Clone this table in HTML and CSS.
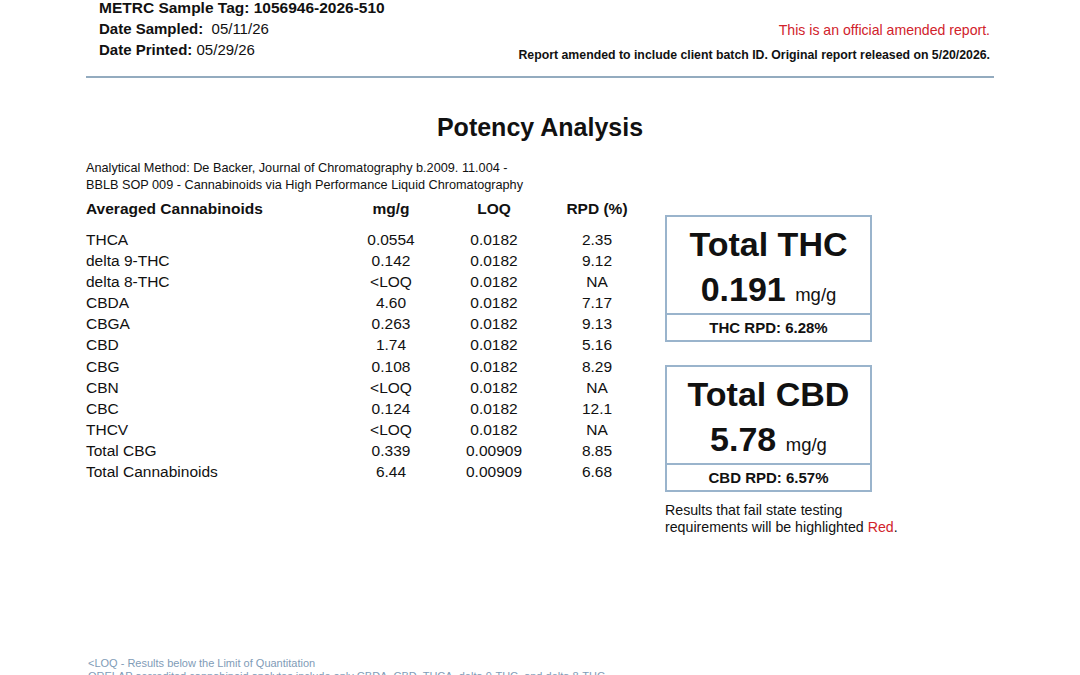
FILE: index.html
```html
<!DOCTYPE html>
<html lang="en">
<head>
<meta charset="utf-8">
<title>Potency Analysis</title>
<link rel="stylesheet" href="styles.css">
</head>
<body>
<div class="page">
  <header class="top">
    <div class="ids">
      <div class="tag">METRC Sample Tag: 1056946-2026-510</div>
      <div class="meta first-meta"><b>Date Sampled:</b>&nbsp; 05/11/26</div>
      <div class="meta"><b>Date Printed:</b> 05/29/26</div>
    </div>
    <div class="notice">
      <div class="amended">This is an official amended report.</div>
      <div class="amend-note">Report amended to include client batch ID. Original report released on 5/20/2026.</div>
    </div>
  </header>
  <div class="rule"></div>

  <h1 class="title">Potency Analysis</h1>

  <section class="main">
    <div class="left">
      <p class="method">Analytical Method: De Backer, Journal of Chromatography b.2009. 11.004 -<br>BBLB SOP 009 - Cannabinoids via High Performance Liquid Chromatography</p>
      <div class="table">
        <div class="row head"><span class="name">Averaged Cannabinoids</span><span>mg/g</span><span>LOQ</span><span>RPD (%)</span></div>
        <div class="row first"><span class="name">THCA</span><span>0.0554</span><span>0.0182</span><span>2.35</span></div>
        <div class="row"><span class="name">delta 9-THC</span><span>0.142</span><span>0.0182</span><span>9.12</span></div>
        <div class="row"><span class="name">delta 8-THC</span><span>&lt;LOQ</span><span>0.0182</span><span>NA</span></div>
        <div class="row"><span class="name">CBDA</span><span>4.60</span><span>0.0182</span><span>7.17</span></div>
        <div class="row"><span class="name">CBGA</span><span>0.263</span><span>0.0182</span><span>9.13</span></div>
        <div class="row"><span class="name">CBD</span><span>1.74</span><span>0.0182</span><span>5.16</span></div>
        <div class="row"><span class="name">CBG</span><span>0.108</span><span>0.0182</span><span>8.29</span></div>
        <div class="row"><span class="name">CBN</span><span>&lt;LOQ</span><span>0.0182</span><span>NA</span></div>
        <div class="row"><span class="name">CBC</span><span>0.124</span><span>0.0182</span><span>12.1</span></div>
        <div class="row"><span class="name">THCV</span><span>&lt;LOQ</span><span>0.0182</span><span>NA</span></div>
        <div class="row"><span class="name">Total CBG</span><span>0.339</span><span>0.00909</span><span>8.85</span></div>
        <div class="row"><span class="name">Total Cannabinoids</span><span>6.44</span><span>0.00909</span><span>6.68</span></div>
      </div>
    </div>
    <div class="right">
      <div class="box">
        <div class="box-top">
          <div class="big">Total THC</div>
          <div class="big">0.191 <span class="unit">mg/g</span></div>
        </div>
        <div class="box-bottom">THC RPD: 6.28%</div>
      </div>
      <div class="box cbd">
        <div class="box-top">
          <div class="big">Total CBD</div>
          <div class="big">5.78 <span class="unit">mg/g</span></div>
        </div>
        <div class="box-bottom">CBD RPD: 6.57%</div>
      </div>
      <p class="fail-note">Results that fail state testing<br>requirements will be highlighted <span class="red">Red</span>.</p>
    </div>
  </section>

  <footer class="foot">
    <div>&lt;LOQ - Results below the Limit of Quantitation</div>
    <div>ORELAP accredited cannabinoid analytes include only CBDA, CBD, THCA, delta 9-THC, and delta 8-THC</div>
  </footer>
</div>
</body>
</html>
```

FILE: styles.css
```css
html, body {
  margin: 0;
  padding: 0;
  background: #ffffff;
}
body {
  font-family: "Liberation Sans", Arial, Helvetica, sans-serif;
  color: #111111;
  width: 1080px;
  height: 675px;
  overflow: hidden;
}
.page {
  padding: 0 86px;
}
.top {
  display: flex;
  justify-content: space-between;
  padding: 0 4px 0 13px;
  height: 65px;
}
.ids .tag {
  font-weight: bold;
  font-size: 15.5px;
  line-height: 16px;
}
.ids .meta {
  font-size: 15px;
  line-height: 21px;
}
.ids .first-meta {
  margin-top: 1.5px;
}
.notice {
  text-align: right;
  padding-top: 20px;
}
.amended {
  color: #d1222b;
  font-size: 14.1px;
  line-height: 20px;
}
.amend-note {
  font-weight: bold;
  font-size: 12.3px;
  line-height: 20px;
  margin-top: 5px;
}
.rule {
  height: 2px;
  background: #93abbf;
  margin-top: 11px;
}
.title {
  margin: 34px 0 0;
  text-align: center;
  font-size: 25px;
  line-height: 30px;
  font-weight: bold;
}
.main {
  display: flex;
  gap: 18px;
  margin-top: 16px;
}
.left {
  width: 561px;
}
.method {
  margin: 2px 0 0;
  font-size: 12.7px;
  line-height: 17px;
  white-space: nowrap;
}
.table {
  margin-top: 4px;
}
.row {
  display: grid;
  grid-template-columns: 255px 100px 106px 100px;
  font-size: 15.5px;
  line-height: 21.1px;
  text-align: center;
}
.row .name {
  text-align: left;
}
.row.head {
  font-weight: bold;
  line-height: 21px;
}
.row.first {
  margin-top: 10px;
}
.right {
  width: 207px;
  padding-top: 57px;
}
.box {
  border: 2px solid #9ab4cc;
}
.box.cbd {
  margin-top: 23px;
}
.box-top {
  height: 98px;
  box-sizing: border-box;
  padding-top: 4.5px;
  border-bottom: 2px solid #9ab4cc;
  text-align: center;
}
.big {
  font-weight: bold;
  font-size: 34px;
  line-height: 45px;
}
.unit {
  font-weight: normal;
  font-size: 18.5px;
}
.box-bottom {
  height: 25px;
  line-height: 25px;
  text-align: center;
  font-weight: bold;
  font-size: 15px;
}
.fail-note {
  margin: 9.5px 0 0;
  font-size: 14.2px;
  line-height: 17px;
  white-space: nowrap;
}
.red {
  color: #d1222b;
}
.foot {
  margin-top: 121px;
  padding-left: 2px;
  color: #7f9cb7;
  font-size: 11px;
  line-height: 13px;
}
```
